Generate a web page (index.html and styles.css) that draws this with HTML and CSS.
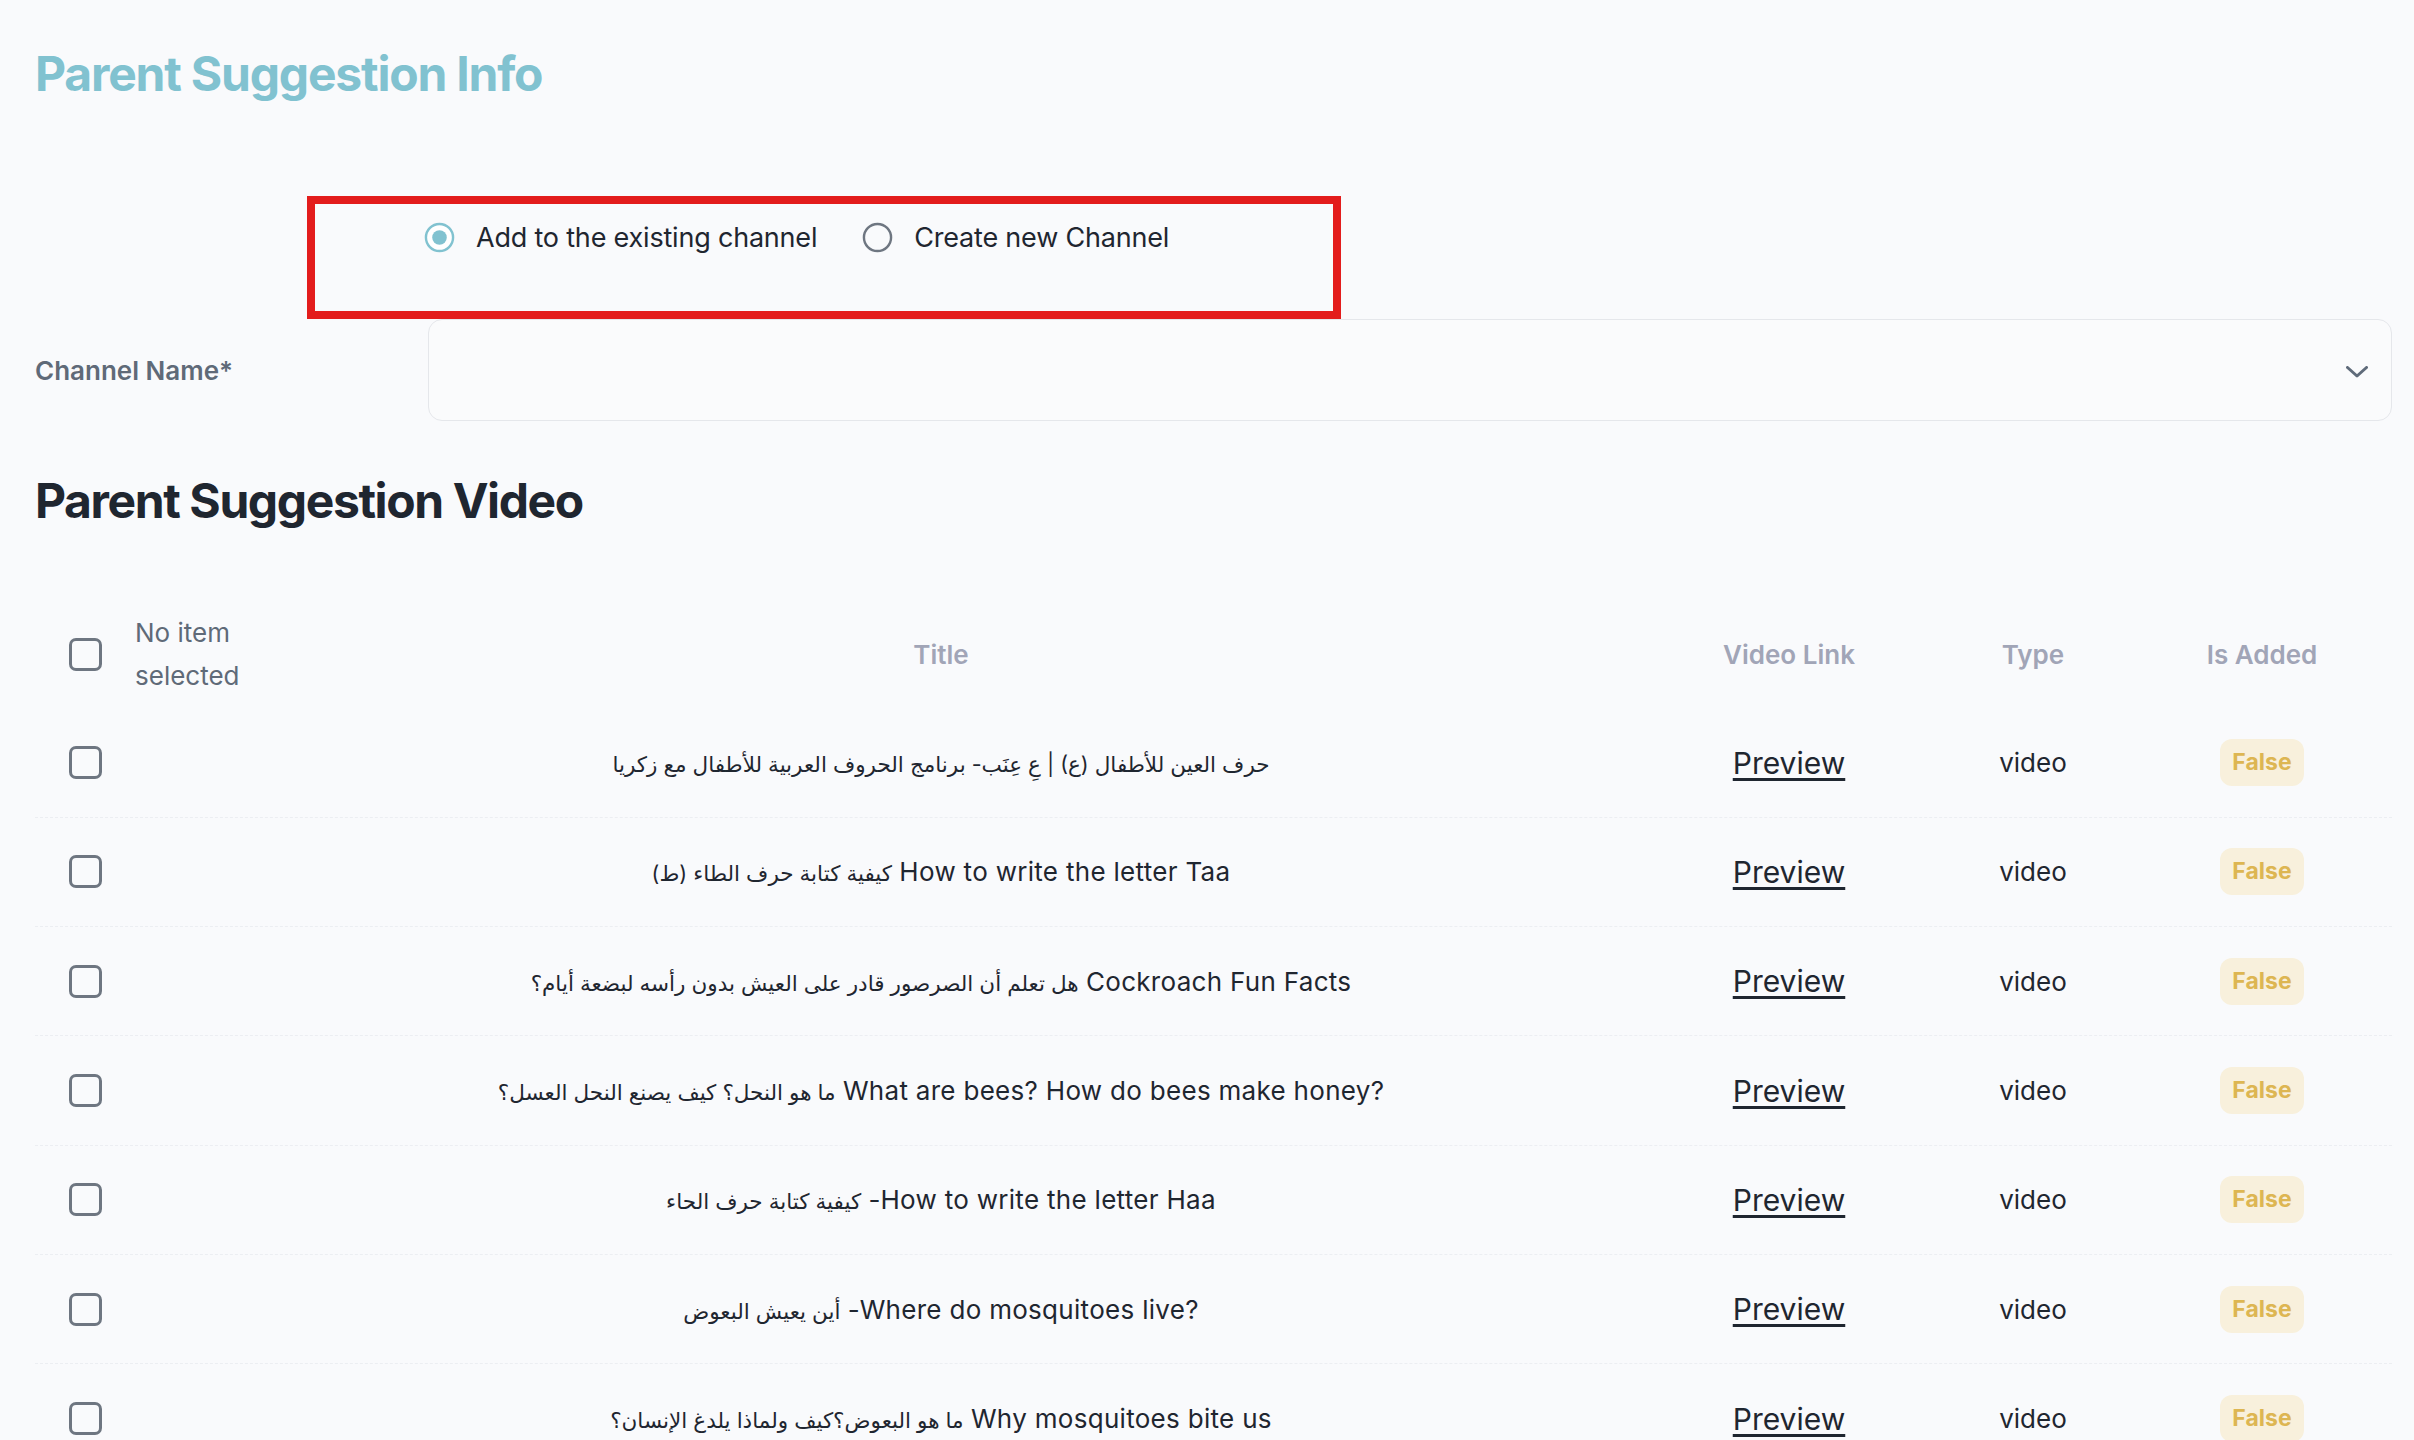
FILE: index.html
```html
<!DOCTYPE html>
<html lang="en">

<head>
    <meta charset="UTF-8">
    <meta name="viewport" content="width=device-width, initial-scale=1.0">
    <title>Parent Suggestion</title>
    <link rel="stylesheet" href="styles.css">
</head>

<body>
    <div class="page">
        <h1 class="info-title">Parent Suggestion Info</h1>

        <div class="mode-box">
            <label class="radio-item">
                <svg class="radio-icon" viewBox="0 0 32 32" width="31" height="31">
                    <circle cx="16" cy="16" r="14" fill="#ffffff" stroke="#81c2d0" stroke-width="2.5" />
                    <circle cx="16" cy="16" r="7.5" fill="#81c2d0" />
                </svg>
                <span>Add to the existing channel</span>
            </label>
            <label class="radio-item">
                <svg class="radio-icon" viewBox="0 0 32 32" width="31" height="31">
                    <circle cx="16" cy="16" r="14" fill="none" stroke="#6e7681" stroke-width="2.5" />
                </svg>
                <span>Create new Channel</span>
            </label>
        </div>

        <div class="form-row">
            <div class="form-label">Channel Name*</div>
            <div class="select-box">
                <svg class="chevron" viewBox="0 0 22 12" width="22" height="12">
                    <polyline points="1.5,1.5 11,10 20.5,1.5" fill="none" stroke="#5f6b7a" stroke-width="3" stroke-linecap="round" stroke-linejoin="round" />
                </svg>
            </div>
        </div>

        <h2 class="section-title">Parent Suggestion Video</h2>

        <div class="video-table">
            <div class="vt-head">
                <div class="cell-check">
                    <span class="checkbox"></span>
                    <span class="head-note">No item selected</span>
                </div>
                <div class="cell-center head-label">Title</div>
                <div class="cell-center head-label">Video Link</div>
                <div class="cell-center head-label">Type</div>
                <div class="cell-center head-label">Is Added</div>
            </div>

            <div class="vt-row">
                <div class="cell-check"><span class="checkbox"></span></div>
                <div class="cell-center video-title"><span class="ar">حرف العين للأطفال (ع) | عِ عِنَب- برنامج الحروف العربية للأطفال مع زكريا</span></div>
                <div class="cell-center"><a href="#" class="preview-link">Preview</a></div>
                <div class="cell-center">video</div>
                <div class="cell-center"><span class="badge-false">False</span></div>
            </div>

            <div class="vt-row">
                <div class="cell-check"><span class="checkbox"></span></div>
                <div class="cell-center video-title"><span class="ar">كيفية كتابة حرف الطاء (ط)</span> How to write the letter Taa</div>
                <div class="cell-center"><a href="#" class="preview-link">Preview</a></div>
                <div class="cell-center">video</div>
                <div class="cell-center"><span class="badge-false">False</span></div>
            </div>

            <div class="vt-row">
                <div class="cell-check"><span class="checkbox"></span></div>
                <div class="cell-center video-title"><span class="ar">هل تعلم أن الصرصور قادر على العيش بدون رأسه لبضعة أيام؟</span> Cockroach Fun Facts</div>
                <div class="cell-center"><a href="#" class="preview-link">Preview</a></div>
                <div class="cell-center">video</div>
                <div class="cell-center"><span class="badge-false">False</span></div>
            </div>

            <div class="vt-row">
                <div class="cell-check"><span class="checkbox"></span></div>
                <div class="cell-center video-title"><span class="ar">ما هو النحل؟ كيف يصنع النحل العسل؟</span> What are bees? How do bees make honey?</div>
                <div class="cell-center"><a href="#" class="preview-link">Preview</a></div>
                <div class="cell-center">video</div>
                <div class="cell-center"><span class="badge-false">False</span></div>
            </div>

            <div class="vt-row">
                <div class="cell-check"><span class="checkbox"></span></div>
                <div class="cell-center video-title"><span class="ar">كيفية كتابة حرف الحاء</span> -How to write the letter Haa</div>
                <div class="cell-center"><a href="#" class="preview-link">Preview</a></div>
                <div class="cell-center">video</div>
                <div class="cell-center"><span class="badge-false">False</span></div>
            </div>

            <div class="vt-row">
                <div class="cell-check"><span class="checkbox"></span></div>
                <div class="cell-center video-title"><span class="ar">أين يعيش البعوض</span> -Where do mosquitoes live?</div>
                <div class="cell-center"><a href="#" class="preview-link">Preview</a></div>
                <div class="cell-center">video</div>
                <div class="cell-center"><span class="badge-false">False</span></div>
            </div>

            <div class="vt-row">
                <div class="cell-check"><span class="checkbox"></span></div>
                <div class="cell-center video-title"><span class="ar">ما هو البعوض؟كيف ولماذا يلدغ الإنسان؟</span> Why mosquitoes bite us</div>
                <div class="cell-center"><a href="#" class="preview-link">Preview</a></div>
                <div class="cell-center">video</div>
                <div class="cell-center"><span class="badge-false">False</span></div>
            </div>
        </div>
    </div>
</body>

</html>
```

FILE: styles.css
```css
* {
    margin: 0;
    padding: 0;
    box-sizing: border-box;
}

body {
    font-family: 'Inter', 'DejaVu Sans', sans-serif;
    background: #f9fafc;
    color: #1f2630;
    overflow: hidden;
}

.page {
    padding: 45px 22px 0 35px;
}

.info-title {
    font-size: 48px;
    line-height: 58px;
    font-weight: 700;
    color: #81c2d0;
    letter-spacing: -1.2px;
}

/* radio choice, with the red marker frame round it */
.mode-box {
    margin: 93px 0 0 272px;
    width: 1034px;
    height: 123px;
    border: 8px solid #e31c1c;
    padding: 18px 0 0 109px;
    display: flex;
    align-items: flex-start;
    gap: 45px;
}

.radio-item {
    display: flex;
    align-items: center;
    gap: 21px;
    font-size: 27px;
    line-height: 31px;
    letter-spacing: -0.2px;
    color: #1f2630;
}

.radio-icon {
    display: block;
    flex-shrink: 0;
}

.form-row {
    display: flex;
    align-items: center;
}

.form-label {
    width: 393px;
    font-size: 26px;
    font-weight: 600;
    color: #5f6a78;
}

.select-box {
    flex: 1;
    height: 102px;
    border: 1px solid #e5e7eb;
    border-radius: 14px;
    background: #fafbfc;
    display: flex;
    align-items: center;
    justify-content: flex-end;
    padding-right: 23px;
}

.chevron {
    display: block;
    margin-top: 4px;
}

.section-title {
    margin-top: 51px;
    font-size: 48px;
    line-height: 58px;
    font-weight: 700;
    color: #1f2630;
    letter-spacing: -1.4px;
}

/* table */
.video-table {
    margin-top: 66px;
}

.vt-head,
.vt-row {
    display: grid;
    grid-template-columns: 202px 1408px 288px 200px 258px;
    align-items: center;
}

.vt-head {
    padding: 15px 0 11.5px;
}

.vt-row {
    height: 109.33px;
    border-bottom: 1px dashed #eceef2;
    font-size: 26px;
}

.cell-check {
    display: flex;
    align-items: center;
    gap: 33px;
    padding-left: 34px;
}

.checkbox {
    display: block;
    flex-shrink: 0;
    width: 33px;
    height: 33px;
    border: 3px solid #6e7681;
    border-radius: 7px;
}

.head-note {
    font-size: 26px;
    line-height: 43px;
    color: #5f6a78;
    padding-right: 4px;
}

.cell-center {
    text-align: center;
}

.head-label {
    font-size: 26px;
    font-weight: 600;
    color: #a1a5b7;
}

.video-title {
    font-size: 26px;
    letter-spacing: 0.3px;
    color: #1f2630;
}

.video-title .ar {
    font-size: 21.5px;
    letter-spacing: 0;
}

.preview-link {
    font-size: 30px;
    color: #1f2630;
    text-decoration: underline;
    text-decoration-thickness: 3px;
    text-underline-offset: 4px;
}

.badge-false {
    display: inline-block;
    height: 47px;
    line-height: 47px;
    padding: 0 12px;
    border-radius: 12px;
    background: #f8f0dc;
    color: #ddb652;
    font-size: 23px;
    font-weight: 700;
}
```
